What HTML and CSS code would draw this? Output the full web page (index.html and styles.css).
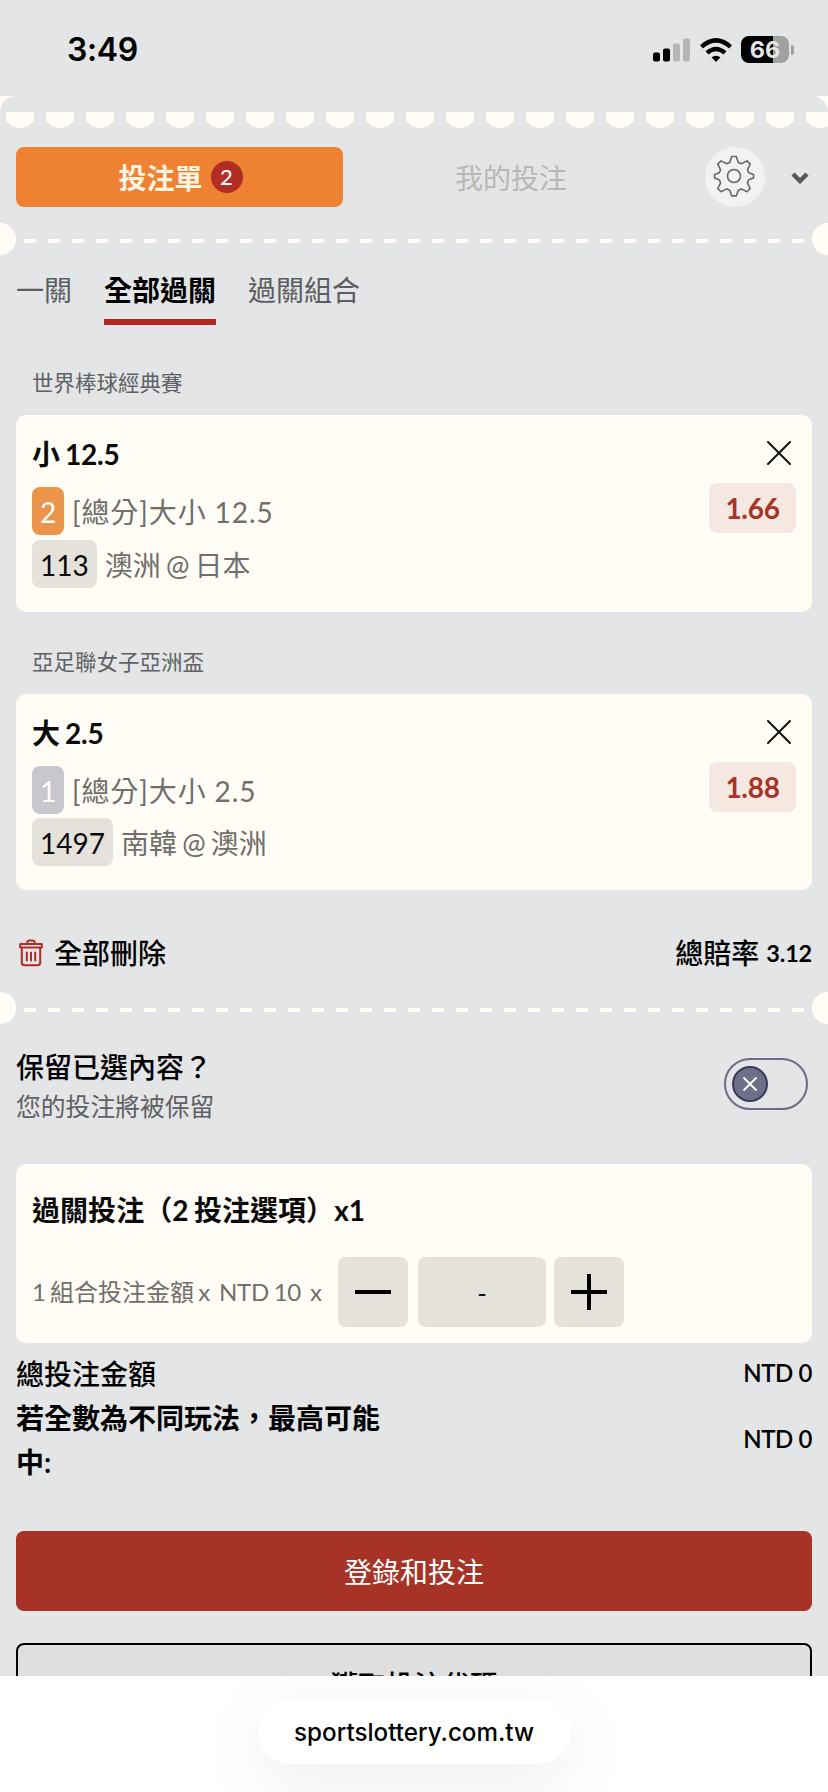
FILE: index.html
```html
<!DOCTYPE html>
<html lang="zh-Hant">
<head>
<meta charset="utf-8">
<title>投注單</title>
<link rel="stylesheet" href="styles.css">
</head>
<body>
<div class="screen">
  <header class="status">
    <span class="time">3:49</span>
    <div class="status-icons">
      <svg width="38" height="24" viewBox="0 0 38 24"><rect x="0" y="14.500" width="7" height="9" rx="2"/><rect x="10" y="10.500" width="7" height="13" rx="2"/><rect class="dim" x="20" y="5.500" width="7" height="18" rx="2"/><rect class="dim" x="30" y="0.500" width="7" height="23" rx="2"/></svg>
      <svg class="wifi" width="32" height="24" viewBox="0 0 32 24"><path d="M1.500 8.800Q16-4 30.500 8.800" fill="none" stroke="#000" stroke-width="4.400"/><path d="M7 14.900Q16 7 25 14.900" fill="none" stroke="#000" stroke-width="4.400"/><path d="M11.500 19.300Q16 16 20.500 19.300L16 24Z"/></svg>
      <div class="battery"><span>66</span></div>
      <i class="battery-tip"></i>
    </div>
  </header>

  <div class="ticket-top"><div class="ticket-cap"></div></div>
  <div class="scallops"></div>

  <nav class="main-nav">
    <button class="slip-btn">投注單<span class="count">2</span></button>
    <span class="my-bets">我的投注</span>
    <button class="gear">
      <svg width="42" height="42" viewBox="0 0 42 42" fill="none" stroke="#66676a" stroke-width="1.600" stroke-linejoin="round"><path d="M18.700 1.500h4.600l2 5.900 3 1.300 5.700-2.800 3.200 3.200-2.800 5.700 1.300 3 4.800 1.700v3.600l-4.800 1.700-1.300 3 2.800 5.700-3.200 3.200-5.700-2.800-3 1.300-2 5.700h-4.600l-2-5.700-3-1.300-5.700 2.800-3.200-3.200 2.800-5.700-1.300-3-4.800-1.700v-3.600l4.800-1.700 1.300-3-2.800-5.700L8 5.900l5.700 2.800 3-1.300z"/><circle cx="21" cy="21" r="6.500"/></svg>
    </button>
    <svg class="chevron" width="18" height="12" viewBox="0 0 18 12"><path d="M2 2l7 7 7-7" fill="none" stroke="#55565a" stroke-width="4.400"/></svg>
  </nav>

  <div class="tear"></div>

  <div class="tabs">
    <span class="tab">一關</span><span class="tab active">全部過關</span><span class="tab">過關組合</span>
  </div>

  <h2 class="league">世界棒球經典賽</h2>
  <section class="card pick first">
    <div class="pick-info">
      <h3>小 12.5</h3>
      <div class="line market"><span class="chip orange">2</span><span>[總分]大小 12.5</span></div>
      <div class="line"><span class="chip wide">113</span><span class="teams">澳洲 @ 日本</span></div>
    </div>
    <div class="pick-side">
      <svg class="close" width="26" height="26" viewBox="0 0 26 26"><path d="M2 2l22 22M24 2L2 24"/></svg>
      <span class="odds">1.66</span>
    </div>
  </section>

  <h2 class="league second">亞足聯女子亞洲盃</h2>
  <section class="card pick">
    <div class="pick-info">
      <h3>大 2.5</h3>
      <div class="line market"><span class="chip grey">1</span><span>[總分]大小 2.5</span></div>
      <div class="line"><span class="chip wide">1497</span><span class="teams">南韓 @ 澳洲</span></div>
    </div>
    <div class="pick-side">
      <svg class="close" width="26" height="26" viewBox="0 0 26 26"><path d="M2 2l22 22M24 2L2 24"/></svg>
      <span class="odds">1.88</span>
    </div>
  </section>

  <div class="summary">
    <svg width="24" height="28" viewBox="0 0 24 28" fill="none" stroke="#b22a22" stroke-width="2" stroke-linejoin="round"><path d="M1.200 5h21.600v3.600H1.200zM2.800 8.600v14.900q0 2.800 2.800 2.800h12.800q2.800 0 2.800-2.800V8.600M8.300 5V3.500q0-2 2-2h3.400q2 0 2 2V5M7.800 12.800v9.400M12 12.800v9.400M16.200 12.800v9.400"/></svg>
    <span class="clear">全部刪除</span>
    <span class="total-odds">總賠率 <b>3.12</b></span>
  </div>

  <div class="tear lower"></div>

  <div class="keep">
    <div>
      <div class="keep-title">保留已選內容？</div>
      <div class="keep-sub">您的投注將被保留</div>
    </div>
    <div class="toggle"><div class="knob"><svg width="16" height="16" viewBox="0 0 16 16"><path d="M1.500 1.500l13 13M14.500 1.500l-13 13" stroke="#fff" stroke-width="1.800"/></svg></div></div>
  </div>

  <section class="card stake">
    <h3>過關投注（2 投注選項）x1</h3>
    <div class="stake-row">
      <span class="stake-text">1 組合投注金額 x</span><span class="stake-unit">NTD 10<span>x</span></span>
      <button class="step"><svg width="36" height="36" viewBox="0 0 36 36"><path d="M0 18h36"/></svg></button>
      <div class="amount">-</div>
      <button class="step"><svg width="36" height="36" viewBox="0 0 36 36"><path d="M0 18h36M18 0v36"/></svg></button>
    </div>
  </section>

  <div class="totals">
    <div class="total-row"><span class="medium">總投注金額</span><span class="money">NTD 0</span></div>
    <div class="total-row tall"><span class="max-win">若全數為不同玩法，最高可能中:</span><span class="money">NTD 0</span></div>
  </div>

  <button class="login">登錄和投注</button>
  <button class="code">獲取投注代碼</button>

  <footer class="browser"><div class="url">sportslottery.com.tw</div></footer>
</div>
</body>
</html>
```

FILE: styles.css
```css
* { box-sizing: border-box; }
body, h2, h3 { margin: 0; }
button { border: 0; padding: 0; font: inherit; }
body { background: #e4e5e7; }
svg { display: block; flex: none; }

.screen {
  width: 828px;
  height: 1792px;
  overflow: hidden;
  display: flex;
  flex-direction: column;
  background: #e4e5e7;
  color: #000;
  font: 28px/44px Lato, "Noto Sans CJK TC", sans-serif;
  white-space: nowrap;
}
.screen > * { flex: none; }

.status {
  height: 96px;
  padding: 3px 34px 0 67px;
  display: flex;
  align-items: center;
  justify-content: space-between;
}
.time { font: 600 32px/40px Inter, sans-serif; letter-spacing: -0.400px; padding-top: 1px; }
.status-icons { display: flex; align-items: center; }
.dim { fill: #b5b6b8; }
.wifi { margin-left: 9px; }
.battery {
  width: 48px;
  height: 27px;
  margin-left: 9px;
  border-radius: 8px;
  background: linear-gradient(90deg, #000 67%, #a0a1a3 67%);
  color: #e4e5e7;
  text-align: center;
  font: 700 23.500px/28px Inter, sans-serif;
}
.battery-tip { width: 3px; height: 10px; margin-left: 2px; background: #a0a1a3; border-radius: 0 3px 3px 0; }

.ticket-top { height: 16px; background: #fffdf6; }
.ticket-cap { height: 16px; background: #e4e5e7; border-radius: 16px 16px 0 0; }
.scallops {
  height: 16px;
  background:
    linear-gradient(90deg, #e4e5e7 6px, transparent 6px 34px, #e4e5e7 34px) 0 0 / 40px 16px,
    radial-gradient(circle at 20px 0, #fffdf6 16px, transparent 16px) 0 0 / 40px 16px;
}

.main-nav { height: 95px; padding: 19px 19px 0 16px; display: flex; align-items: flex-start; }
.slip-btn {
  width: 327px;
  height: 60px;
  padding: 2px 0 0 2px;
  display: flex;
  align-items: center;
  justify-content: center;
  gap: 8px;
  border-radius: 8px;
  background: #ef8132;
  color: #fff3e2;
  font-weight: 700;
}
.count {
  width: 32px;
  height: 32px;
  margin-top: -2px;
  border-radius: 50%;
  background: #b22d23;
  color: #fff;
  text-align: center;
  font: 500 22px/32px Lato, sans-serif;
}
.my-bets { width: 336px; height: 60px; text-align: center; color: #b7b8ba; line-height: 63px; }
.gear {
  width: 60px;
  height: 60px;
  margin-left: 26px;
  display: flex;
  align-items: flex-start;
  padding: 8px 0 0 8px;
  border-radius: 50%;
  background: #f2f2f2;
}
.chevron { margin: 25px 0 0 26px; }

.tear {
  height: 32px;
  background:
    radial-gradient(circle at 0 16px, #fffdf6 15.700px, transparent 16.300px),
    radial-gradient(circle at 828px 16px, #fffdf6 15.700px, transparent 16.300px),
    repeating-linear-gradient(90deg, #fffdf6 0 12px, transparent 12px 24px) 24px 16px / 780px 4px no-repeat;
}

.tabs { height: 70px; padding: 14px 16px 0; display: flex; gap: 32px; }
.tab { height: 56px; line-height: 43px; color: #5c5d60; }
.tab.active { color: #000; font-weight: 700; border-bottom: 6px solid #b02822; }

.league { margin: 42px 32px 16px; height: 32px; font-size: 21.500px; line-height: 32px; font-weight: 400; color: #606164; }
.league.second { margin-top: 34px; }

.card { margin: 0 16px; border-radius: 10px; background: #fffdf6; }
.pick { height: 196px; padding: 17px 16px 0; display: flex; justify-content: space-between; }
.pick.first { height: 197px; }
h3 { font-size: 28px; line-height: 44px; height: 44px; font-weight: 700; color: #0a0a0a; letter-spacing: -0.200px; word-spacing: -1.500px; }
.line { display: flex; align-items: center; gap: 8px; height: 48px; margin-top: 4px; color: #706f6b; line-height: 48px; }
.line > span:last-child { padding-top: 2px; }
.first .line { margin-top: 5px; }
.line.market, .first .line.market { margin-top: 11px; letter-spacing: 0.900px; }
.teams { word-spacing: -2px; }
.line .chip { width: 32px; height: 48px; border-radius: 8px; text-align: center; line-height: 50px; color: #fff; letter-spacing: 0; }
.orange { background: #eb954c; }
.grey { background: #c8c7cd; }
.line .wide { width: auto; padding: 0 8px; background: #e5e2dc; color: #0a0a0a; }
.pick-side { display: flex; flex-direction: column; align-items: flex-end; padding-top: 8px; }
.close { margin-right: 4px; stroke: #111; stroke-width: 2; stroke-linecap: round; }
.odds {
  width: 87px;
  height: 50px;
  margin-top: 17px;
  border-radius: 8px;
  background: #f5e8e0;
  color: #a93327;
  text-align: center;
  font-weight: 700;
  letter-spacing: -0.300px;
  line-height: 51px;
}

.summary { height: 102px; padding: 27px 16px 0 19px; display: flex; align-items: flex-start; font-weight: 500; line-height: 72px; }
.summary svg { margin-top: 22px; }
.clear { margin-left: 11px; }
.total-odds { margin-left: auto; }
.total-odds b { font-size: 23.500px; font-weight: 700; letter-spacing: -0.200px; position: relative; top: -2px; }

.keep { height: 140px; padding: 21px 20px 0 16px; display: flex; justify-content: space-between; font-weight: 500; }
.keep-sub { font-size: 24.800px; line-height: 36px; font-weight: 400; color: #5f6063; }
.toggle { width: 84px; height: 52px; margin-top: 13px; padding: 6px; border: 2px solid #6f6b86; border-radius: 26px; }
.knob { width: 36px; height: 36px; border: 2px solid #3c3a5c; border-radius: 50%; background: #6e7087; display: flex; align-items: center; justify-content: center; }

.stake { height: 179px; padding: 24px 16px 0; }
.stake h3 { letter-spacing: 0.050px; }
.stake-row { display: flex; align-items: center; margin-top: 25px; height: 70px; color: #706f6b; font-size: 24px; }
.stake-text { width: 187px; word-spacing: -2px; }
.stake-unit { width: 119px; letter-spacing: -0.300px; word-spacing: -1px; display: flex; gap: 9px; }
.step { width: 70px; height: 70px; border-radius: 8px; background: #e5e2dc; display: flex; align-items: center; justify-content: center; }
.step path { stroke: #000; stroke-width: 4; }
.amount { width: 128px; height: 70px; margin: 0 8px 0 10px; border-radius: 8px; background: #e5e2dc; color: #111; text-align: center; line-height: 72px; font-size: 26px; }

.totals { padding: 9px 16px 0; height: 188px; }
.total-row { display: flex; align-items: center; justify-content: space-between; height: 44px; }
.total-row.tall { height: 88px; }
.medium { font-weight: 500; line-height: 46px; }
.max-win { width: 376px; font-weight: 700; white-space: normal; }
.money { font-size: 24px; font-weight: 600; letter-spacing: -0.400px; padding-bottom: 2px; }

.login { height: 80px; margin: 0 16px; border-radius: 8px; background: #a73226; color: #fff; line-height: 82px; }
.code { height: 80px; margin: 32px 16px 0; border: 2px solid #000; border-radius: 8px; background: #dfdfdf; line-height: 80px; font-weight: 500; }

.browser { position: relative; height: 116px; margin-top: -47px; padding-top: 24px; background: #fff; overflow: hidden; }
.url {
  width: 313px;
  height: 64px;
  margin: 0 auto;
  border-radius: 32px;
  background: #fffffd;
  box-shadow: 0 16px 70px rgba(0, 0, 0, 0.080);
  text-align: center;
  font: 500 24.200px/66px Inter, sans-serif;
}
```
